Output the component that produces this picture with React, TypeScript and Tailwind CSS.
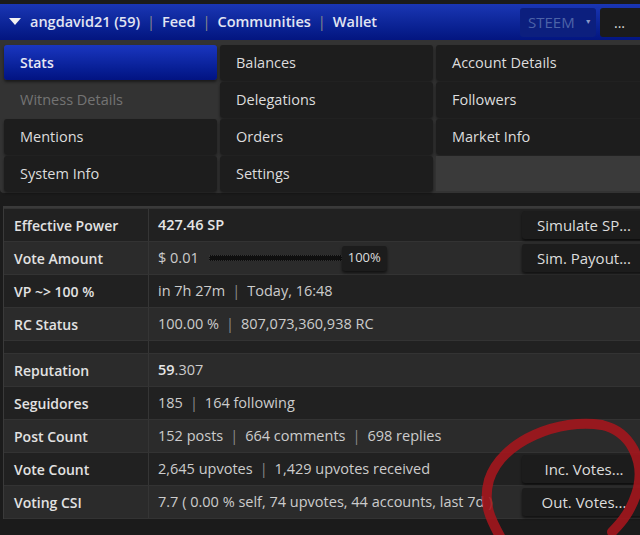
import React from 'react'

const tabs = [
  ['Stats', 'Balances', 'Account Details'],
  ['Witness Details', 'Delegations', 'Followers'],
  ['Mentions', 'Orders', 'Market Info'],
  ['System Info', 'Settings', ''],
]

function Sep() {
  return <span className="px-[7px] font-normal text-[#8a8a8a]">|</span>
}

function SideButton({ label }: { label: string }) {
  return (
    <div className="ml-auto mr-[2px] flex h-[28px] w-[124px] items-center justify-center rounded-[3px] bg-[#1c1c1c] text-[15px] text-[#ddd] shadow-[0_2px_3px_rgba(0,0,0,0.6)]">
      {label}
    </div>
  )
}

function Row({ label, dark, children }: { label: string; dark?: boolean; children?: React.ReactNode }) {
  return (
    <div className={`flex h-[32px] items-center ${dark ? 'bg-[#212121]' : 'bg-[#2b2b2b]'}`}>
      <div className="flex h-full w-[145px] items-center border-r border-[#353535] pl-[10px] text-[14px] font-semibold text-[#e2e2e2]">
        {label}
      </div>
      <div className="flex h-full flex-1 items-center pl-[9px] text-[14.5px] text-[#cccccc]">{children}</div>
    </div>
  )
}

function App() {
  return (
    <div className="relative h-[535px] w-[640px] overflow-hidden bg-[#1b1b1b] font-['Open_Sans',sans-serif]">
      <div className="w-[648px]">
        {/* header */}
        <div className="mt-[4px] flex h-[36px] items-center bg-gradient-to-b from-[#1a36b4] to-[#031580] text-[14.5px] font-semibold text-[#e2e5f2]">
          <svg width="12" height="8" viewBox="0 0 12 8" className="ml-[9px] mr-[9px]">
            <polygon points="0,0 12,0 6,7" fill="#f2f2f2" />
          </svg>
          <span>angdavid21 (59)</span>
          <Sep />
          <span>Feed</span>
          <Sep />
          <span>Communities</span>
          <Sep />
          <span>Wallet</span>
          <div className="ml-auto flex h-[29px] w-[76px] items-center rounded-[3px] bg-[#0c1f7e] pl-[8px] text-[15px] font-normal text-[#4d63a8]">
            STEEM
            <span className="ml-[10px] text-[7px] text-[#8a98c8]">▼</span>
          </div>
          <div className="ml-[4px] flex h-[29px] w-[48px] items-center rounded-[3px] bg-[#1b1b1b] pl-[14px] text-[14px] font-normal text-[#ddd]">
            ...
          </div>
        </div>

        {/* tabs */}
        <div className="rounded-b-[4px] bg-[#333] px-[4px] pb-[2px] pt-[5px]">
          <div className="grid grid-cols-[213px_213px_213px] gap-x-[3px] gap-y-[2px]">
            {tabs.flat().map((t, i) => {
              if (t === 'Stats')
                return (
                  <div key={i} className="flex h-[35px] items-center rounded-[3px] bg-gradient-to-b from-[#1a36c0] to-[#021382] pl-[16px] text-[14px] font-semibold text-[#e8e8f4] shadow-[0_2px_3px_rgba(0,0,0,0.5)]">
                    {t}
                  </div>
                )
              if (t === 'Witness Details')
                return (
                  <div key={i} className="flex h-[35px] items-center pl-[16px] text-[14.5px] text-[#737373]">
                    {t}
                  </div>
                )
              if (t === '') return <div key={i} className="h-[35px] bg-[#3a3a3a]" />
              return (
                <div key={i} className="flex h-[35px] items-center rounded-[3px] bg-[#1d1d1d] pl-[16px] text-[14.5px] text-[#dcdcdc] shadow-[0_2px_3px_rgba(0,0,0,0.5)]">
                  {t}
                </div>
              )
            })}
          </div>
        </div>

        {/* stats table */}
        <div className="ml-[3px] mt-[13px] flex flex-col gap-[1px] border-l border-t-[2px] border-[#3a3a3a] bg-[#333] pb-[1px] pt-[1px]">
          <Row label="Effective Power" dark>
            <span className="font-semibold text-[#e6e6e6]">427.46 SP</span>
            <SideButton label="Simulate SP..." />
          </Row>
          <Row label="Vote Amount">
            <span>$ 0.01</span>
            <div className="ml-[10px] h-[6px] w-[133px] border border-dotted border-[#333] bg-[#0e0e0e]" />
            <div className="flex h-[25px] w-[45px] items-center justify-center rounded-[3px] bg-[#1c1c1c] text-[13px] text-[#ddd] shadow-[0_2px_3px_rgba(0,0,0,0.6)]">
              100%
            </div>
            <SideButton label="Sim. Payout..." />
          </Row>
          <Row label="VP ~> 100 %" dark>
            <span>in 7h 27m</span>
            <Sep />
            <span>Today, 16:48</span>
          </Row>
          <Row label="RC Status">
            <span>100.00 %</span>
            <Sep />
            <span>807,073,360,938 RC</span>
          </Row>
          <div className="flex h-[12px] bg-[#212121]">
            <div className="w-[145px] border-r border-[#353535]" />
          </div>
          <Row label="Reputation">
            <span className="font-semibold text-[#e6e6e6]">59</span>
            <span>.307</span>
          </Row>
          <Row label="Seguidores" dark>
            <span>185</span>
            <Sep />
            <span>164 following</span>
          </Row>
          <Row label="Post Count">
            <span>152 posts</span>
            <Sep />
            <span>664 comments</span>
            <Sep />
            <span>698 replies</span>
          </Row>
          <Row label="Vote Count" dark>
            <span>2,645 upvotes</span>
            <Sep />
            <span>1,429 upvotes received</span>
            <SideButton label="Inc. Votes..." />
          </Row>
          <Row label="Voting CSI">
            <span>7.7 ( 0.00 % self, 74 upvotes, 44 accounts, last 7d )</span>
            <SideButton label="Out. Votes..." />
          </Row>
        </div>
      </div>

      {/* red marker circle */}
      <svg className="pointer-events-none absolute left-0 top-0" width="640" height="535">
        <path
          d="M602 425 C560 418 502 440 489 480 C482 505 492 522 502 540 M602 425 C632 432 644 462 638 488 C632 510 622 522 612 532"
          fill="none"
          stroke="#a3161d"
          strokeOpacity="0.9"
          strokeWidth="10"
          strokeLinecap="round"
        />
      </svg>
    </div>
  )
}

export default App
